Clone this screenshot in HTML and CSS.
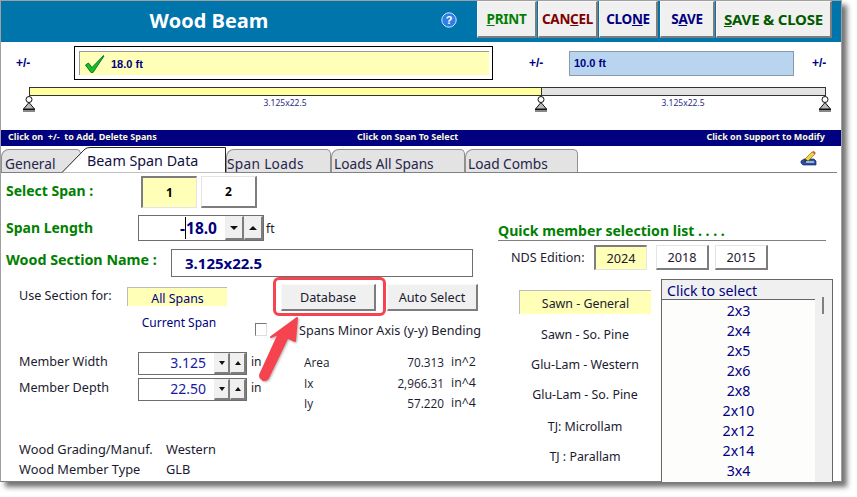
FILE: index.html
```html
<!DOCTYPE html>
<html lang="en">
<head>
<meta charset="utf-8">
<title>Wood Beam</title>
<link rel="stylesheet" href="styles.css">
</head>
<body>
<div class="window">
  <header class="header">
    <h1 class="title">Wood Beam</h1>
    <svg class="help" viewBox="0 0 16 16" width="16" height="16"><circle cx="8" cy="8" r="7.2" fill="#2f7fe8" stroke="#cfe4ff" stroke-width="1"/><text x="8" y="12" text-anchor="middle" class="help-q">?</text></svg>
    <div class="actions">
      <button class="act print"><u>P</u>RINT</button>
      <button class="act cancel">CAN<u>C</u>EL</button>
      <button class="act clone">CLO<u>N</u>E</button>
      <button class="act save">S<u>A</u>VE</button>
      <button class="act close"><u>S</u>AVE &amp; CLOSE</button>
    </div>
  </header>

  <div class="spans">
    <span class="pm pm-first">+/-</span>
    <div class="span-frame">
      <div class="span-sel">
        <svg class="check" viewBox="0 0 20 18" width="20" height="18"><path d="M0.5 10 L3.5 8 L7 12.5 L18.5 0.5 L19 1 L8 17.5 L6 17.5 Z" fill="#18c018" stroke="#064" stroke-width=".9"/></svg>
        <span>18.0 ft</span>
      </div>
    </div>
    <span class="pm pm-mid">+/-</span>
    <div class="span-other">10.0 ft</div>
    <span class="pm pm-last">+/-</span>
  </div>

  <div class="beam">
    <div class="seg seg-a"></div>
    <div class="seg seg-b"></div>
  </div>
  <div class="supports">
    <svg class="sup" viewBox="0 0 16 18" width="16" height="18"><use href="#support"/></svg>
    <span class="sec">3.125x22.5</span>
    <svg class="sup" viewBox="0 0 16 18" width="16" height="18"><use href="#support"/></svg>
    <span class="sec">3.125x22.5</span>
    <svg class="sup" viewBox="0 0 16 18" width="16" height="18"><use href="#support"/></svg>
  </div>

  <div class="hint">
    <span class="hint-a">Click on &nbsp;+/- &nbsp;to Add, Delete Spans</span>
    <span class="hint-b">Click on Span To Select</span>
    <span class="hint-c">Click on Support to Modify</span>
  </div>

  <nav class="tabs">
    <span class="tab tab-general">General</span>
    <span class="tab-active">
      <svg class="tab-shape" viewBox="0 0 164 26" width="164" height="26"><path d="M0 25.5 L23 2 Q25 .5 28 .5 H163.5 V25.5" fill="#fff" stroke="#222" stroke-width="1"/></svg>
      <span class="tab-active-text">Beam Span Data</span>
    </span>
    <span class="tab tab-loads">Span Loads</span>
    <span class="tab tab-all">Loads All Spans</span>
    <span class="tab tab-combs">Load Combs</span>
    <svg class="pencil" viewBox="0 0 17 16" width="17" height="16"><path d="M1 11 L4 9 H14 L16 11 V15 H3 L1 13 Z" fill="#2a4fa8" stroke="#14286a" stroke-width=".7"/><path d="M5 9 L12 2 L15 4 L8 11 Z" fill="#f4d23a" stroke="#8a6a10" stroke-width=".7"/><path d="M12 2 L13.5 .8 L16 3 L15 4 Z" fill="#e2574c"/><path d="M4 12 L5 9 L8 11 Z" fill="#333"/><rect x="6" y="11" width="8" height="2" fill="#9fb4c8"/></svg>
  </nav>

  <main class="body">
    <section class="left">
      <div class="row row-select">
        <span class="g-label w-select">Select Span :</span>
        <button class="span-btn on">1</button>
        <button class="span-btn">2</button>
      </div>
      <div class="row row-length">
        <span class="g-label w-length">Span Length</span>
        <div class="spin spin-big">
          <span class="spin-val"><span class="caret">-</span>18.0</span>
          <span class="spin-btn"><i class="dn"></i></span>
          <span class="spin-btn"><i class="up"></i></span>
        </div>
        <span class="unit">ft</span>
      </div>
      <div class="row row-name">
        <span class="g-label w-name">Wood Section Name :</span>
        <div class="name-box">3.125x22.5</div>
      </div>
      <div class="row row-use">
        <span class="text w-use">Use Section for:</span>
        <span class="all-spans">All Spans</span>
        <span class="db-wrap"><button class="btn db">Database</button></span>
        <button class="btn auto">Auto Select</button>
      </div>
      <div class="row row-current">
        <span class="current">Current Span</span>
        <span class="chk"></span>
        <span class="text minor">Spans Minor Axis (y-y) Bending</span>
      </div>
      <div class="members">
        <div class="mem-col">
          <div class="mem-row">
            <span class="text w-mem">Member Width</span>
            <div class="spin spin-small"><span class="spin-val">3.125</span><span class="spin-btn"><i class="dn"></i></span><span class="spin-btn"><i class="up"></i></span></div>
            <span class="unit">in</span>
          </div>
          <div class="mem-row">
            <span class="text w-mem">Member Depth</span>
            <div class="spin spin-small"><span class="spin-val">22.50</span><span class="spin-btn"><i class="dn"></i></span><span class="spin-btn"><i class="up"></i></span></div>
            <span class="unit">in</span>
          </div>
        </div>
        <div class="props">
          <span>Area</span><span class="num">70.313</span><span>in^2</span>
          <span>Ix</span><span class="num">2,966.31</span><span>in^4</span>
          <span>Iy</span><span class="num">57.220</span><span>in^4</span>
        </div>
      </div>
      <div class="grading">
        <span>Wood Grading/Manuf.</span><span>Western</span>
        <span>Wood Member Type</span><span>GLB</span>
      </div>
    </section>

    <section class="right">
      <h2 class="quick">Quick member selection list . . . .</h2>
      <div class="nds">
        <span class="text nds-label">NDS Edition:</span>
        <button class="yr on">2024</button>
        <button class="yr y18">2018</button>
        <button class="yr y15">2015</button>
      </div>
      <div class="picker">
        <ul class="types">
          <li class="on">Sawn - General</li>
          <li>Sawn - So. Pine</li>
          <li>Glu-Lam - Western</li>
          <li>Glu-Lam - So. Pine</li>
          <li class="tj">TJ: Microllam</li>
          <li>TJ : Parallam</li>
        </ul>
        <div class="list">
          <div class="list-main">
            <div class="list-head">Click to select</div>
            <div class="list-item">2x3</div>
            <div class="list-item">2x4</div>
            <div class="list-item">2x5</div>
            <div class="list-item">2x6</div>
            <div class="list-item">2x8</div>
            <div class="list-item">2x10</div>
            <div class="list-item">2x12</div>
            <div class="list-item">2x14</div>
            <div class="list-item">3x4</div>
          </div>
          <div class="scroll"><span class="thumb"></span></div>
        </div>
      </div>
    </section>
  </main>

  <svg class="arrow" viewBox="0 0 50 75" width="50" height="75"><path d="M38 4 L36 27 L28.5 23.5 L9 64 Q6.5 67 3.5 65.5 Q0 63.5 1.5 60 L20 19.5 L12 23 Z" fill="#f5444f" stroke="#f5444f" stroke-width="2" stroke-linejoin="round"/></svg>
</div>

<svg class="defs" width="0" height="0"><defs>
  <g id="support" fill="none" stroke="#111" stroke-width="1">
    <circle cx="8" cy="3.5" r="3"/>
    <path d="M8 6.5 L2.5 13 H13.5 Z" fill="#b9b9b9"/>
    <path d="M2 13.5 H14 M3 14 V16 M5 14 V16 M7 14 V16 M9 14 V16 M11 14 V16 M13 14 V16"/>
  </g>
</defs></svg>
</body>
</html>
```

FILE: styles.css
```css
*, *::before, *::after { box-sizing: border-box; }
html, body { margin: 0; padding: 0; background: #fff; }
body { width: 857px; height: 497px; overflow: hidden; font-family: "Noto Sans", "Open Sans", sans-serif; }
button { font-family: inherit; padding: 0; cursor: default; }
ul { list-style: none; margin: 0; padding: 0; }

.window {
  position: relative;
  width: 842px;
  height: 482px;
  background: #fff;
  border: 1px solid #a0a0a0;
  border-bottom-color: #808080;
  box-shadow: 5px 5px 5px rgba(70, 70, 70, .75);
  overflow: visible;
}
.defs { position: absolute; }

/* header */
.header { display: flex; align-items: flex-start; height: 41px; background: #0075ab; }
.title { width: 416px; margin: 0; text-align: center; color: #fff; font-size: 20px; font-weight: 700; line-height: 40px; font-family: "Open Sans", sans-serif; }
.help { margin: 11px 0 0 24px; }
.help-q { fill: #fff; font: 700 11px "Liberation Sans", sans-serif; }
.actions { display: flex; margin-left: 20px; gap: 1px; }
.act {
  height: 37px;
  background: #f0f0f0;
  border: 1px solid #f8f8f8;
  border-right: 2px solid #7d7d7d;
  border-bottom: 2px solid #7d7d7d;
  font-size: 13.5px;
  font-weight: 700;
  letter-spacing: -.3px;
}
.print { width: 60px; color: #008000; }
.cancel { width: 60px; color: #800000; }
.clone { width: 59px; color: #000080; }
.save { width: 55px; color: #000080; margin-left: 1px; }
.close { width: 116px; color: #005a00; font-size: 15px; letter-spacing: -.2px; }

/* spans */
.spans { display: flex; align-items: center; height: 34px; margin-top: 4px; }
.pm { width: 15px; color: #000080; font-size: 12px; font-weight: 700; font-family: "Liberation Sans", sans-serif; }
.pm-first { margin-left: 15px; }
.span-frame { width: 419px; height: 34px; margin-left: 43px; padding: 4px 3px 4px 4px; background: #fff; border: 1px solid #000; }
.span-sel {
  display: flex; align-items: center; height: 24px; padding-left: 5px; gap: 6px;
  border-top: 1px solid #9a9a9a; border-left: 1px solid #9a9a9a;
  background: #ffffb8;
  color: #000080; font: 700 11px "Liberation Sans", sans-serif;
}
.check { margin-top: 1px; }
.pm-mid { margin-left: 36px; }
.span-other {
  display: flex; align-items: center; width: 225px; height: 25px; margin: 0 0 0 25px; padding-left: 4px;
  background: #b9d4ef; border: 1px solid #8a9aac;
  color: #000080; font: 700 11px "Liberation Sans", sans-serif;
}
.pm-last { margin-left: 18px; }

/* beam */
.beam { display: flex; margin: 7px 0 0 28px; }
.seg { height: 9px; border: 1px solid #333; }
.seg-a { width: 513px; background: #ffffa0; }
.seg-b { width: 284px; background: #e2e2e2; border-left: 0; }
.supports { display: flex; height: 18px; margin-left: 20px; }
.sup { flex: none; }
.sec { flex: 1 1 0; text-align: center; color: #2b2b8a; font-size: 8.5px; line-height: 13px; padding-top: 0; }
.supports .sec:nth-of-type(1) { flex: 0 0 496px; }
.supports .sec:nth-of-type(2) { flex: 0 0 268px; }

.hint {
  display: flex; height: 16px; margin-top: 16px; padding: 0 16px 0 7px;
  background: #000080; color: #fbfbd8; font-size: 9px; font-weight: 700; line-height: 14px;
}
.hint span { white-space: pre-wrap; }
.hint-a { width: 349px; }
.hint-c { margin-left: auto; }

/* tabs */
.tabs { display: flex; align-items: flex-end; height: 26px; width: 836px; margin-top: 1px; border-bottom: 1px solid #808080; }
.tab {
  height: 23px; padding-left: 0;
  background: #e3e3e3; color: #26264a;
  border: 1px solid #909090; border-bottom: 0; border-radius: 8px 5px 0 0;
  font-size: 13.7px; line-height: 28px; white-space: nowrap; overflow: hidden;
}
.tab-general { width: 80px; padding-left: 3px; }
.tab-active { position: relative; display: block; width: 164px; height: 26px; margin: 0 0 -1px -19px; }
.tab-shape { position: absolute; left: 0; top: 0; }
.tab-active-text { position: relative; display: block; padding-left: 25px; color: #101040; font-size: 14.3px; line-height: 28px; white-space: nowrap; }
.tab-loads { width: 105px; letter-spacing: .3px; }
.tab-all { width: 134px; padding-left: 2px; }
.tab-combs { width: 113px; padding-left: 2px; }
.pencil { margin: 0 0 6px 222px; }

/* form body */
.body { display: flex; height: 309px; }
.left { width: 496px; flex: none; }
.row { display: flex; }
.g-label { color: #008000; font-weight: 700; font-size: 14px; white-space: nowrap; }
.text { color: #1b1b2f; font-size: 12.6px; white-space: nowrap; }
.unit { color: #1b1b2f; font-size: 12px; }

.row-select { height: 32px; margin-top: 3px; padding-left: 5px; align-items: center; }
.w-select { width: 135px; margin-top: -3px; }
.span-btn {
  width: 56px; height: 32px; margin-right: 4px; background: #fff;
  border: 1px solid #e4e4e4; border-right: 2px solid #7d7d7d; border-bottom: 2px solid #7d7d7d;
  color: #000; font-size: 12px; font-weight: 700;
}
.span-btn.on {
  background: #ffffb8;
  border: 1px solid #e4e4e4; border-top: 2px solid #7d7d7d; border-left: 2px solid #7d7d7d;
}

.row-length { height: 26px; margin-top: 7px; padding-left: 5px; align-items: center; }
.w-length { width: 132px; margin-top: -1px; }
.spin { display: flex; background: #fff; border: 1px solid #6e6e6e; }
.spin-big { width: 126px; height: 26px; }
.spin-small { width: 109px; height: 23px; }
.spin-val { flex: 1; text-align: right; color: #000080; }
.spin-big .spin-val { padding-right: 8px; font-size: 15.5px; font-weight: 700; line-height: 24px; }
.spin-small .spin-val { padding-right: 8px; font-size: 14px; line-height: 20px; color: #1a1aa0; }
.caret { border-right: 1px solid #000; }
.spin-btn {
  display: flex; align-items: center; justify-content: center; flex: none;
  background: #f0f0f0; border: 1px solid #eee; border-right: 2px solid #7d7d7d; border-bottom: 2px solid #7d7d7d;
}
.spin-big .spin-btn { width: 19px; }
.spin-small .spin-btn { width: 16px; }
.dn, .up { display: block; width: 0; height: 0; border-left: 4px solid transparent; border-right: 4px solid transparent; }
.spin-small .dn, .spin-small .up { border-left-width: 3px; border-right-width: 3px; }
.dn { border-top: 4px solid #111; }
.up { border-bottom: 4px solid #111; }
.unit { margin-left: 3px; }
.row-length .unit { margin-left: 2px; }

.row-name { height: 28px; margin-top: 8px; padding-left: 5px; }
.w-name { width: 165px; margin-top: 1px; font-size: 14.3px; }
.name-box { width: 302px; height: 28px; padding-left: 13px; border: 1px solid #6e6e6e; color: #000080; font-size: 15px; font-weight: 700; line-height: 27px; }

.row-use { height: 27px; margin-top: 7px; padding-left: 18px; align-items: flex-start; }
.w-use { width: 108px; line-height: 24px; }
.all-spans {
  width: 100px; height: 19px; margin-top: 3px; text-align: center;
  border-top: 1px solid #bbb; border-left: 1px solid #bbb;
  background: #ffffb8;
  color: #000080; font-size: 12.4px; line-height: 21px; overflow: hidden;
}
.db-wrap { position: relative; display: block; margin-left: 54px; }
.db-wrap::after { content: ""; position: absolute; left: -8px; top: -7px; width: 113px; height: 39px; border: 3px solid #f5444f; border-radius: 6px; pointer-events: none; }
.btn {
  display: block; height: 27px; background: #f0f0f0; color: #1b1b2f; font-size: 12.7px;
  border: 1px solid #f8f8f8; border-right: 2px solid #7d7d7d; border-bottom: 2px solid #7d7d7d;
}
.db { width: 95px; }
.auto { width: 91px; margin-left: 11px; }

.row-current { height: 27px; margin-top: 2px; }
.current { width: 100px; margin-left: 128px; text-align: center; color: #000080; font-size: 12px; line-height: 20px; white-space: nowrap; }
.chk { width: 12px; height: 13px; margin: 10px 0 0 26px; background: #fff; border: 1px solid #777; border-right-color: #ddd; border-bottom-color: #ddd; }
.minor { margin: 9px 0 0 32px; line-height: 18px; }

.members { display: flex; margin-top: 12px; }
.mem-col { width: 303px; }
.mem-row { display: flex; height: 23px; margin-bottom: 3px; padding-left: 18px; }
.w-mem { width: 119px; line-height: 20px; }
.mem-row .unit { margin-left: 4px; line-height: 19px; }
.props { display: grid; grid-template-columns: 60px 80px 40px; grid-auto-rows: 20.5px; color: #1b1b2f; font-family: "Open Sans", sans-serif; font-size: 11.8px; line-height: 20px; }
.props span:nth-child(3n) { padding-left: 7px; font-size: 12.4px; }
.num { text-align: right; }

.grading { display: grid; grid-template-columns: 147px auto; grid-auto-rows: 20px; margin: 25px 0 0 18px; color: #1b1b2f; font-size: 12.8px; line-height: 20px; white-space: nowrap; }

/* right column */
.right { flex: none; width: 340px; }
.quick { width: 328px; height: 19px; margin: 49px 0 0 1px; color: #008000; font-size: 14.1px; font-weight: 700; line-height: 18px; white-space: nowrap; border-bottom: 1px solid #808080; }
.nds { display: flex; margin-top: 4px; align-items: center; padding-left: 14px; }
.nds-label { width: 83px; }
.yr {
  width: 53px; height: 25px; background: #fff; color: #1b1b2f; font-size: 12.7px;
  border: 1px solid #e4e4e4; border-right: 2px solid #7d7d7d; border-bottom: 2px solid #7d7d7d;
}
.yr.on {
  background: #ffffb8;
  border: 1px solid #e4e4e4; border-top: 2px solid #7d7d7d; border-left: 2px solid #7d7d7d;
}
.y18 { margin-left: 9px; }
.y15 { margin-left: 6px; }

.picker { display: flex; margin-top: 9px; }
.types { width: 132px; margin: 11px 0 0 22px; color: #1b1b2f; font-size: 12.4px; text-align: center; line-height: 25px; white-space: nowrap; }
.types li { height: 30px; }
.types li.on {
  height: 24px; margin-bottom: 8px;
  border-top: 1px solid #bbb; border-left: 1px solid #bbb;
  background: #ffffb8;
}
.types .tj { margin-top: 2px; }
.list { display: flex; width: 172px; height: 203px; margin-left: 10px; border: 1px solid #666; border-bottom: 0; overflow: hidden; }
.list-main { flex: 1; background: #fdfdfb; color: #000080; font-size: 14.2px; }
.list-head { height: 20px; margin-bottom: 1px; padding-left: 5px; background: #f0f0f0; border-bottom: 1px solid #666; line-height: 21px; }
.list-item { height: 20px; text-align: center; line-height: 20px; }
.scroll { position: relative; width: 17px; background: #f0f0f0; }
.thumb { position: absolute; left: 7px; top: 17px; width: 2px; height: 17px; background: #808080; }

/* annotation */
.arrow { position: absolute; left: 258px; top: 313px; filter: drop-shadow(1px 1px 1px rgba(0, 0, 0, .3)); }
```
